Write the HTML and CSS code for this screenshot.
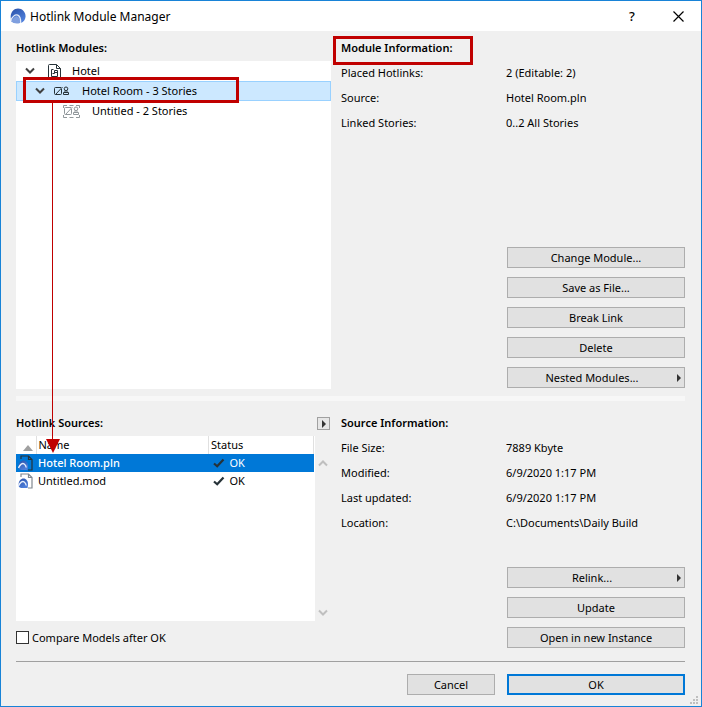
FILE: index.html
```html
<!DOCTYPE html>
<html lang="en">
<head>
<meta charset="utf-8">
<title>Hotlink Module Manager</title>
<link rel="stylesheet" href="styles.css">
</head>
<body>
<svg class="defs" width="0" height="0" aria-hidden="true">
  <defs>
    <linearGradient id="blue" x1="0" y1="0" x2="0.6" y2="1">
      <stop offset="0" stop-color="#2a50a8"/>
      <stop offset="1" stop-color="#4f80dc"/>
    </linearGradient>
    <symbol id="chevron" viewBox="0 0 10 8"><path d="M1 1.5 5 5.500 9 1.500" fill="none" stroke="currentColor" stroke-width="2"/></symbol>
    <symbol id="check" viewBox="0 0 12 10"><path d="M1 5.500 4.200 8.300 10.500 1.500" fill="none" stroke="#263238" stroke-width="2.200"/></symbol>
    <symbol id="file" viewBox="0 0 16 16">
      <path d="M3 4V1h7.500L14 4.500V15h-4M10.500 1v3.500H14" fill="none" stroke="currentColor" stroke-width="1.200"/>
      <path d="M1 14C-.5 9 2.500 5.500 5.500 5.500c3.500 0 5.500 4 4 9.500H3z" fill="url(#blue)"/>
      <path d="M.5 13C2 9 4.500 7.800 6.200 9 7.500 10 8 11 8.200 12.500" fill="none" stroke="#e6eefc" stroke-width="1.400"/>
    </symbol>
    <symbol id="module" viewBox="0 0 15 10">
      <path d="M7 1.500H1.500Q.5 1.500.5 2.500v5q0 1 1 1h5q1 0 1-1V3M8.500 1 1.500 8.500" fill="none" stroke="currentColor"/>
      <path d="M9.500 8.500h5v-2h-5zM11 6.500V4.500M13 6.500V4.500" fill="none" stroke="currentColor"/>
      <circle cx="12" cy="2.800" r="1.800" fill="none" stroke="currentColor"/>
    </symbol>
  </defs>
</svg>
<main class="window">
  <header class="titlebar">
    <svg class="logo" viewBox="0 0 16 16" aria-hidden="true">
      <path d="M1 11.500C-.5 5 3.500.5 8 .5c4.500 0 8 4 7.500 8.500-.3 3-2 5-4.500 6H4z" fill="url(#blue)"/>
      <path d="M1 13.500C3 9.500 5.500 7.500 7.500 8.500c2 1 2.500 3.500 2.500 6.500Q5 16.500 1 13.500Z" fill="#7f9fdf"/>
      <path d="M.5 12.500C3 8 5.500 6.200 7.800 7.200c2.200 1 2.900 4 2.900 7.800" fill="none" stroke="#e4ebf8" stroke-width="1.300"/>
    </svg>
    <h1>Hotlink Module Manager</h1>
    <button class="caption" aria-label="Help">?</button>
    <button class="caption" aria-label="Close"><svg width="11" height="11" viewBox="0 0 11 11"><path d="M.5.5l10 10M10.500.5l-10 10" stroke="#000" stroke-width="1.200"/></svg></button>
  </header>

  <div class="content">
    <section class="pane modules">
      <div class="side">
        <h2>Hotlink Modules:</h2>
        <ul class="tree">
          <li class="level1">
            <svg class="chev" aria-hidden="true"><use href="#chevron"/></svg>
            <svg class="project" viewBox="0 0 13 15" aria-hidden="true"><path d="M8.500.5h-7q-1 0-1 1v12q0 1 1 1h10q1 0 1-1v-9zM8.500.5v4h4" fill="none" stroke="currentColor"/><path d="M5.500 5.500h-2v7h6v-6h-3v3h-2M7 8.500h2" fill="none" stroke="currentColor"/></svg>
            <span>Hotel</span>
          </li>
          <li class="level2 selected">
            <svg class="chev" aria-hidden="true"><use href="#chevron"/></svg>
            <svg class="mod" aria-hidden="true"><use href="#module"/></svg>
            <span>Hotel Room - 3 Stories</span>
            <i class="mark mark-row"></i>
            <svg class="pointer" width="14" height="350" viewBox="0 0 14 350" aria-hidden="true"><path d="M6.500 0v338" stroke="#c00000"/><path d="M0 336h14L7 350z" fill="#c00000"/></svg>
          </li>
          <li class="level3">
            <svg class="nested" viewBox="0 0 17 13" aria-hidden="true"><path d="M.5 3V.5H4M6.500.5h4M13 .5h3.500V3M16.500 10v2.500H13M10.500 12.500h-4M4 12.500H.5V10" fill="none" stroke="currentColor"/><use href="#module" x="1" y="1" width="15" height="10"/></svg>
            <span>Untitled - 2 Stories</span>
          </li>
        </ul>
      </div>
      <div class="details">
        <h2 class="marked">Module Information:<i class="mark mark-title"></i></h2>
        <dl>
          <dt>Placed Hotlinks:</dt><dd>2 (Editable: 2)</dd>
          <dt>Source:</dt><dd>Hotel Room.pln</dd>
          <dt>Linked Stories:</dt><dd>0..2 All Stories</dd>
        </dl>
        <div class="actions">
          <button>Change Module...</button>
          <button>Save as File...</button>
          <button>Break Link</button>
          <button>Delete</button>
          <button class="menu">Nested Modules...</button>
        </div>
      </div>
    </section>

    <div class="splitter"></div>

    <section class="pane sources">
      <div class="side">
        <div class="heading">
          <h2>Hotlink Sources:</h2>
          <button class="expand" aria-label="Source options"></button>
        </div>
        <div class="list">
          <div class="sheet">
            <table>
              <thead><tr><th class="sort"><svg width="10" height="6" viewBox="0 0 10 6" aria-hidden="true"><path d="M5 0l5 6H0z" fill="#a0a0a0"/></svg></th><th>Name</th><th class="status">Status</th></tr></thead>
              <tbody>
                <tr class="selected"><td><svg class="file" aria-hidden="true"><use href="#file"/></svg></td><td>Hotel Room.pln</td><td><span class="state"><svg class="check" aria-hidden="true"><use href="#check"/></svg>OK</span></td></tr>
                <tr><td><svg class="file" aria-hidden="true"><use href="#file"/></svg></td><td>Untitled.mod</td><td><span class="state"><svg class="check" aria-hidden="true"><use href="#check"/></svg>OK</span></td></tr>
              </tbody>
            </table>
          </div>
          <div class="scroll">
            <svg class="chev up" aria-hidden="true"><use href="#chevron"/></svg>
            <svg class="chev" aria-hidden="true"><use href="#chevron"/></svg>
          </div>
        </div>
        <label class="compare"><input type="checkbox">Compare Models after OK</label>
      </div>
      <div class="details">
        <h2>Source Information:</h2>
        <dl>
          <dt>File Size:</dt><dd>7889 Kbyte</dd>
          <dt>Modified:</dt><dd>6/9/2020 1:17 PM</dd>
          <dt>Last updated:</dt><dd>6/9/2020 1:17 PM</dd>
          <dt>Location:</dt><dd>C:\Documents\Daily Build</dd>
        </dl>
        <div class="actions">
          <button class="menu">Relink...</button>
          <button>Update</button>
          <button>Open in new Instance</button>
        </div>
      </div>
    </section>

    <footer>
      <button class="cancel">Cancel</button>
      <button class="primary">OK</button>
    </footer>
  </div>
  <svg class="grip" width="8" height="8" viewBox="0 0 8 8" aria-hidden="true"><path d="M6 0h2v2H6zM3 3h2v2H3zM6 3h2v2H6zM0 6h2v2H0zM3 6h2v2H3zM6 6h2v2H6z" fill="#bfbfbf"/></svg>
</main>
</body>
</html>
```
FILE: styles.css
```css
* { box-sizing: border-box; }
body { margin: 0; font: 11px/23px "Noto Sans", "Open Sans", sans-serif; color: #000; }
h1, h2, ul, dl, dd { margin: 0; padding: 0; }
h2 { height: 25px; font-size: 11px; font-weight: 600; }
svg { display: block; flex: none; }
.defs { position: absolute; }
button { font: inherit; color: inherit; padding: 0; }

.window {
  position: relative;
  display: flex;
  flex-direction: column;
  min-height: 100vh;
  border: 1px solid #1883d7;
  background: #f0f0f0;
}
.titlebar { display: flex; align-items: center; height: 30px; padding-left: 9px; background: #fff; }
.logo { width: 16px; height: 16px; }
h1 { flex: 1; margin-left: 4px; font-size: 12px; font-weight: 400; }
.caption {
  display: flex;
  align-items: center;
  justify-content: center;
  width: 46px;
  height: 28px;
  border: 0;
  background: none;
  font-size: 13px;
  font-weight: 500;
}

.content { flex: 1; display: flex; flex-direction: column; padding: 5px 16px 11px 15px; }
.pane { display: grid; grid-template-columns: 315fr 344fr; gap: 10px; }
.modules { flex: 1; min-height: 353px; }
.sources { min-height: 237px; }
.side, .details { display: flex; flex-direction: column; }
.splitter { height: 5px; margin: 7px 0 10px; background: #f7f7f7; }

.tree { flex: 1; list-style: none; background: #fff; line-height: 18px; }
.tree li { position: relative; display: flex; align-items: center; height: 20px; border: 1px solid transparent; }
.tree .selected { background: #cce8ff; border-color: #99d1ff; }
.level1 { padding-left: 8px; }
.level2 { padding-left: 18px; }
.level3 { padding-left: 46px; }
.chev { width: 10px; height: 8px; color: #404040; }
.project { width: 13px; height: 15px; margin: 0 11px 0 13px; color: #263238; }
.mod { width: 15px; height: 10px; margin: 0 13px 0 9px; color: #263238; }
.nested { width: 17px; height: 13px; margin-right: 12px; color: #90979b; }

.mark { position: absolute; border: 3px solid #c00000; }
.mark-row { left: 6px; top: -5px; width: 216px; height: 26px; }
.pointer { position: absolute; left: 29px; top: 21px; z-index: 2; }
.marked { position: relative; }
.mark-title { left: -8px; top: 0; width: 140px; height: 29px; }

dl { display: grid; grid-template-columns: 165fr 179fr; grid-auto-rows: 25px; }
.actions { display: flex; flex-direction: column; gap: 9px; width: 178px; margin: auto 0 0 auto; }
.modules .actions { padding-bottom: 1px; }
.actions button, footer button {
  position: relative;
  height: 21px;
  border: 1px solid #adadad;
  background: #e1e1e1;
  line-height: 19px;
}
.actions .menu { padding-right: 8px; }
.menu::after {
  content: "";
  position: absolute;
  right: 3px;
  top: 6px;
  border: solid transparent;
  border-width: 4px 0 4px 4px;
  border-left-color: #333;
}

.heading { display: flex; align-items: center; justify-content: space-between; }
.expand { width: 13px; height: 13px; margin-right: 1px; border: 1px solid #a0a0a0; background: #e6e6e6; display: grid; place-items: center; }
.expand::after { content: ""; border: solid transparent; border-width: 4px 0 4px 4px; border-left-color: #333; }
.list { flex: 1; display: flex; }
.sheet { flex: 1; padding-right: 1px; background: #fff; }
.scroll { display: flex; flex-direction: column; justify-content: space-between; width: 16px; padding: 23px 3px 4px; }
.scroll .chev { color: #bfbfbf; }
.up { transform: rotate(180deg); }
table { width: 100%; table-layout: fixed; border-collapse: collapse; line-height: 18px; }
th, td { height: 18px; padding: 0 0 0 2px; text-align: left; font-weight: 400; }
th { border-right: 1px solid #e0e0e0; }
.sort { width: 20px; }
.sort svg { margin: 5px 0 0 5px; }
.status { width: 105px; }
.selected td { background: #0078d7; color: #fff; }
tbody .selected td:nth-child(2) { font-weight: 500; }
.file { width: 16px; height: 16px; color: #808890; }
.selected .file { color: #263238; }
.state { display: flex; align-items: center; padding-left: 2px; }
.check { width: 12px; height: 10px; margin-right: 5px; }
.compare { display: flex; align-items: center; height: 27px; padding-top: 6px; line-height: 20px; }
.compare input { appearance: none; width: 13px; height: 13px; margin: 0 3px 0 0; border: 1px solid #333; background: #fff; }

footer { display: flex; justify-content: flex-end; gap: 12px; margin-top: 13px; padding-top: 12px; border-top: 1px solid #a0a0a0; }
.cancel { width: 88px; }
footer .primary { width: 178px; border: 2px solid #0078d7; line-height: 17px; }
.grip { position: absolute; right: 3px; bottom: 2px; }
```
